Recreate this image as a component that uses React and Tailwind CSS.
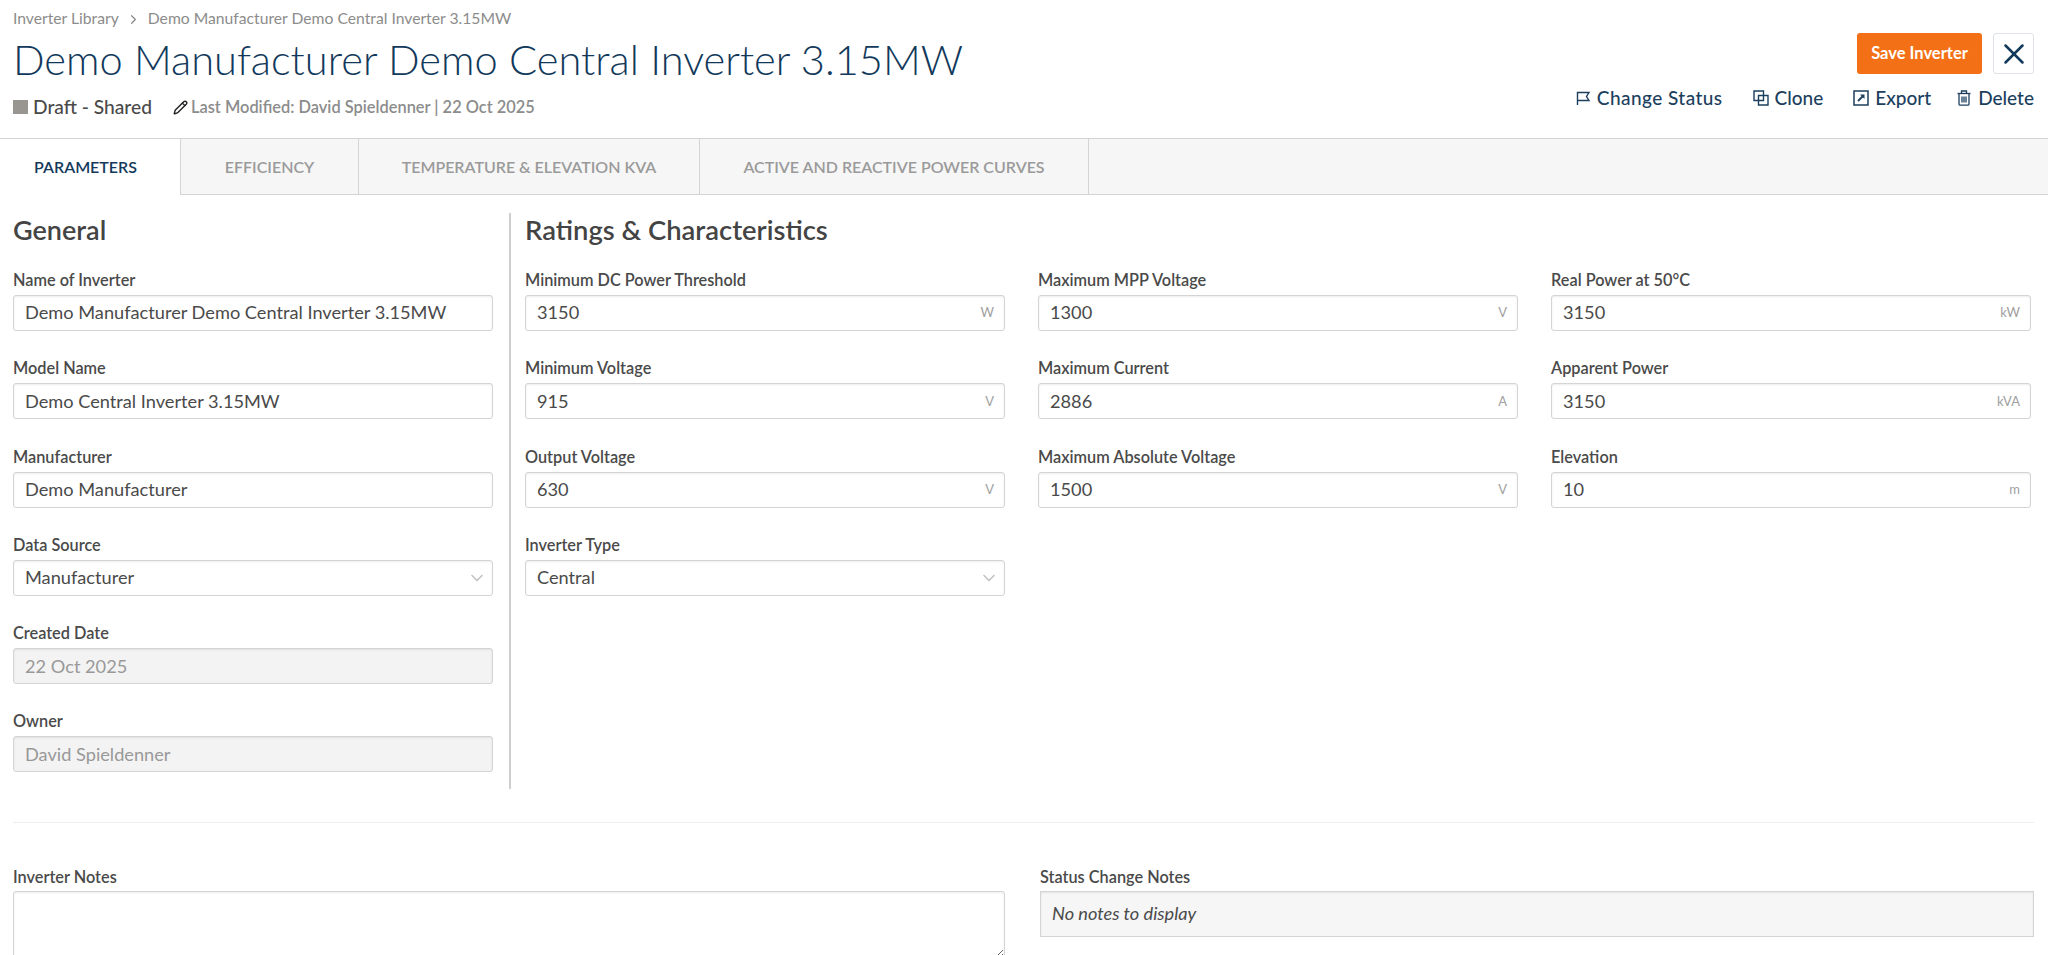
import { ChevronRight, ChevronDown, X, Pencil } from 'lucide-react'

const fontStack = "font-['Lato','Open_Sans',sans-serif]"

const tabs = [
  { label: 'PARAMETERS', width: 'w-[181px]', active: true },
  { label: 'EFFICIENCY', width: 'w-[178px]' },
  { label: 'TEMPERATURE & ELEVATION KVA', width: 'w-[341px]' },
  { label: 'ACTIVE AND REACTIVE POWER CURVES', width: 'w-[389px]' },
]

const ratings = [
  [
    { label: 'Minimum DC Power Threshold', value: '3150', unit: 'W' },
    { label: 'Minimum Voltage', value: '915', unit: 'V' },
    { label: 'Output Voltage', value: '630', unit: 'V' },
    { label: 'Inverter Type', value: 'Central', select: true },
  ],
  [
    { label: 'Maximum MPP Voltage', value: '1300', unit: 'V' },
    { label: 'Maximum Current', value: '2886', unit: 'A' },
    { label: 'Maximum Absolute Voltage', value: '1500', unit: 'V' },
  ],
  [
    { label: 'Real Power at 50°C', value: '3150', unit: 'kW' },
    { label: 'Apparent Power', value: '3150', unit: 'kVA' },
    { label: 'Elevation', value: '10', unit: 'm' },
  ],
]

const general = [
  { label: 'Name of Inverter', value: 'Demo Manufacturer Demo Central Inverter 3.15MW' },
  { label: 'Model Name', value: 'Demo Central Inverter 3.15MW' },
  { label: 'Manufacturer', value: 'Demo Manufacturer' },
  { label: 'Data Source', value: 'Manufacturer', select: true },
  { label: 'Created Date', value: '22 Oct 2025', disabled: true },
  { label: 'Owner', value: 'David Spieldenner', disabled: true },
]

// Action icons are drawn by hand, the lucide ones have different strokes
function FlagIcon() {
  return (
    <svg width="16" height="16" viewBox="0 0 16 16" fill="none" stroke="currentColor" strokeWidth="1.4">
      <path d="M2.5 15V2.5h11.5l-2.5 4 2.5 4H2.5" />
    </svg>
  )
}

function CloneIcon() {
  return (
    <svg width="16" height="16" viewBox="0 0 16 16" fill="none" stroke="currentColor" strokeWidth="1.4">
      <path d="M1 1h9.5v9.5H1z" />
      <path d="M5.5 5.5H15V15H5.5z" />
    </svg>
  )
}

function ExportIcon() {
  return (
    <svg width="16" height="16" viewBox="0 0 16 16" fill="none" stroke="currentColor" strokeWidth="1.5">
      <path d="M1 1h14v14H1z" />
      <path d="M5 11l5-5" strokeWidth="1.8" />
      <path d="M7 4.5h4.5V9z" fill="currentColor" stroke="none" />
    </svg>
  )
}

function TrashIcon() {
  return (
    <svg width="16" height="16" viewBox="0 0 16 16" fill="none" stroke="currentColor" strokeWidth="1.3">
      <path d="M1.5 3.5h13" />
      <path d="M5.5 3.5V1h5v2.5" />
      <path d="M3 3.5V14a1.2 1.2 0 0 0 1.2 1.2h7.6A1.2 1.2 0 0 0 13 14V3.5" />
      <path d="M6 6.5v6M8 6.5v6M10 6.5v6" />
    </svg>
  )
}

function Field({ label, value, unit, select, disabled }) {
  return (
    <div className="h-[88.3px]">
      <div className="h-[22px] text-[16.3px] leading-[22px] font-semibold text-[#4a4a4a]">{label}</div>
      <div
        className={`mt-[4px] flex h-[36px] items-center justify-between rounded-[3px] border border-[#d4d4d4] pl-[11px] pr-[10px] text-[18.2px] shadow-[inset_0_1px_2px_rgba(0,0,0,0.08)]
          ${disabled ? 'bg-[#f3f3f3] text-[#999999]' : 'bg-white text-[#4a4a4a]'}`}
      >
        <span>{value}</span>
        {unit && <span className="text-[13px] text-[#a0a0a0]">{unit}</span>}
        {select && <ChevronDown size={20} className="-mr-[5px] text-[#c4c4c4]" />}
      </div>
    </div>
  )
}

function Action({ icon: Icon, label, className = '' }) {
  return (
    <button className={`flex items-center gap-[6px] text-[19px] font-medium text-[#1c3f5e] ${className}`}>
      <Icon />
      {label}
    </button>
  )
}

export default function App() {
  return (
    <div className={`h-[955px] w-[2048px] overflow-hidden bg-white ${fontStack}`}>
      {/* Header */}
      <header className="flex h-[138px] justify-between pl-[13px] pr-[14px]">
        <div>
          <div className="flex h-[20px] items-center gap-[7px] pt-[18px] text-[15.7px] text-[#8c8c8c]">
            <span>Inverter Library</span>
            <ChevronRight size={15} />
            <span>Demo Manufacturer Demo Central Inverter 3.15MW</span>
          </div>
          <h1 className="mt-[13px] text-[41.6px] leading-[52px] font-light text-[#12395b]">
            Demo Manufacturer Demo Central Inverter 3.15MW
          </h1>
          <div className="mt-[8px] flex items-center">
            <span className="h-[14px] w-[15px] bg-[#999590]" />
            <span className="ml-[5px] text-[19.2px] font-medium text-[#4a4a4a]">Draft - Shared</span>
            <Pencil size={15} strokeWidth={2.25} className="ml-[21px] text-[#222222]" />
            <span className="ml-[3px] text-[16.4px] font-semibold text-[#8c8c8c]">
              Last Modified: David Spieldenner | 22 Oct 2025
            </span>
          </div>
        </div>
        <div className="flex flex-col items-end pt-[33px]">
          <div className="flex items-center gap-[11px]">
            <button className="h-[41px] w-[125px] rounded-[3px] bg-[#f37016] text-[16.5px] font-bold text-white">
              Save Inverter
            </button>
            <button className="flex h-[41px] w-[41px] items-center justify-center rounded-[3px] border border-[#dfe3e7] text-[#12395b]">
              <X size={34} strokeWidth={1.75} />
            </button>
          </div>
          <div className="mt-[10px] flex items-center gap-[30px]">
            <Action icon={FlagIcon} label="Change Status" className="tracking-[0.45px]" />
            <Action icon={CloneIcon} label="Clone" />
            <Action icon={ExportIcon} label="Export" />
            <div className="-ml-[5px]">
              <Action icon={TrashIcon} label="Delete" />
            </div>
          </div>
        </div>
      </header>

      {/* Tabs */}
      <nav className="flex h-[57px] border-t border-b border-[#d4d4d4] bg-[#f6f6f6]">
        {tabs.map((tab) => (
          <div
            key={tab.label}
            className={`flex items-center justify-center border-r border-[#d4d4d4] text-[16px] font-semibold
              ${tab.width} ${tab.active ? '-mb-px bg-white pr-[9px] text-[#12395b]' : 'text-[#9a9a9a]'}`}
          >
            {tab.label}
          </div>
        ))}
      </nav>

      {/* Parameters */}
      <section className="flex pt-[18px] pl-[13px] pr-[14px]">
        <div className="w-[498px] shrink-0 border-r-2 border-[#cfcfcf] pr-[16px]">
          <h2 className="h-[36px] text-[27px] leading-[34px] font-semibold text-[#444444]">General</h2>
          <div className="mt-[20px] h-[520px]">
            {general.map((f) => (
              <Field key={f.label} {...f} />
            ))}
          </div>
        </div>
        <div className="flex-1 pl-[14px]">
          <h2 className="h-[36px] text-[27.4px] leading-[34px] font-semibold text-[#444444]">
            Ratings &amp; Characteristics
          </h2>
          <div className="mt-[20px] grid grid-cols-[480px_480px_480px] gap-x-[33px]">
            {ratings.map((col, i) => (
              <div key={i}>
                {col.map((f) => (
                  <Field key={f.label} {...f} />
                ))}
              </div>
            ))}
          </div>
        </div>
      </section>

      <hr className="mt-[33px] ml-[13px] mr-[14px] border-[#eeeeee]" />

      {/* Notes */}
      <section className="mt-[43px] flex pl-[13px] pr-[14px]">
        <div className="w-[992px] shrink-0">
          <div className="h-[22px] text-[16.3px] leading-[22px] font-semibold text-[#4a4a4a]">Inverter Notes</div>
          <textarea
            readOnly
            className="mt-[3px] block h-[68px] w-full rounded-[3px] border border-[#d4d4d4] shadow-[inset_0_1px_2px_rgba(0,0,0,0.08)]"
          />
        </div>
        <div className="ml-[35px] flex-1">
          <div className="h-[22px] text-[16.3px] leading-[22px] font-semibold text-[#4a4a4a]">Status Change Notes</div>
          <div className="mt-[3px] flex h-[46px] items-center border border-[#d4d4d4] bg-[#f6f6f6] pl-[11px] text-[18.2px] text-[#4a4a4a] italic shadow-[inset_0_1px_2px_rgba(0,0,0,0.08)]">
            No notes to display
          </div>
        </div>
      </section>
    </div>
  )
}
